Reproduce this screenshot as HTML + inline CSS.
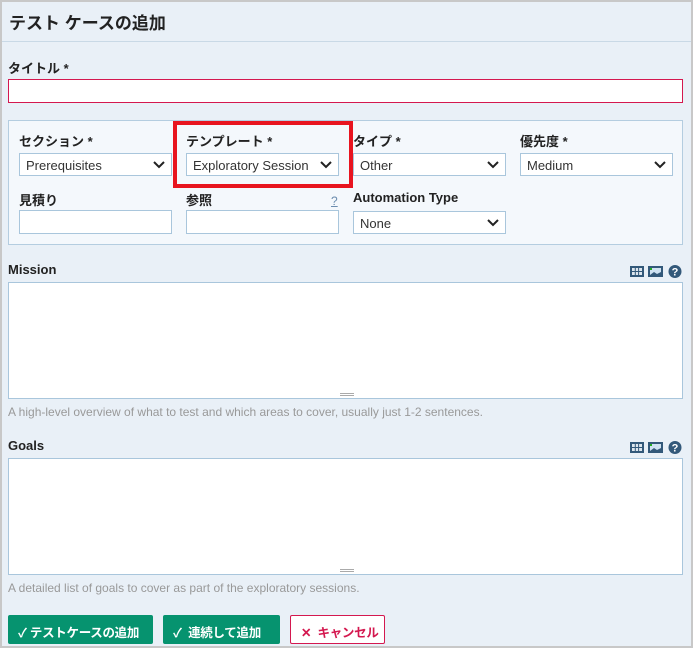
<!DOCTYPE html>
<html><head><meta charset="utf-8"><style>
*{box-sizing:border-box;margin:0;padding:0}
html{width:693px;height:648px;overflow:hidden}
body{width:693px;height:648px;overflow:hidden;background:#c8c8c8;font-family:"Liberation Sans","Noto Sans CJK JP",sans-serif;position:relative}
.pg{position:absolute;left:2px;top:2px;width:689px;height:644px;background:#e9f0f7;overflow:hidden}
.a{position:absolute;white-space:nowrap}
.h1{left:7px;top:7px;font-size:17px;font-weight:bold;color:#222}
.sep{left:0;top:39px;width:689px;height:1px;background:#c9d9e6}
.lbl{font-size:13px;color:#222;font-weight:bold}
.inp{background:#fff;border:1px solid #a9c6dc}
.sel{background:#fff;border:1px solid #a9c6dc;font-size:13px;color:#333;padding:4px 0 0 6px;height:23px;width:153px}
.sel svg{position:absolute;right:6px;top:7px}
.box{left:6px;top:118px;width:675px;height:125px;background:#f4f8fc;border:1px solid #b4cde0}
.help{font-size:12px;color:#999}
.ta{background:#fff;border:1px solid #a9c6dc;left:6px;width:675px;height:117px}
.grip{position:absolute;left:331px;bottom:2px;width:14px;height:3px;border-top:1px solid #aaa;border-bottom:1px solid #aaa}
.btn{top:613px;height:29px;font-size:12.5px;font-weight:bold;letter-spacing:-0.3px;color:#fff;background:#06936f;border-radius:2px;padding:7px 0 0 10px}
.ic{width:54px;height:14px}
</style></head><body><div class="pg">
<div class="a h1">テスト ケースの追加</div>
<div class="a sep"></div>
<div class="a lbl" style="left:6px;top:56px">タイトル *</div>
<div class="a" style="left:6px;top:77px;width:675px;height:24px;background:#fff;border:1px solid #d4184f"></div>
<div class="a box"></div>
<div class="a lbl" style="left:17px;top:129px">セクション *</div>
<div class="a lbl" style="left:184px;top:129px">テンプレート *</div>
<div class="a lbl" style="left:351px;top:129px">タイプ *</div>
<div class="a lbl" style="left:518px;top:129px">優先度 *</div>
<div class="a sel" style="left:17px;top:151px">Prerequisites<svg width="12" height="8"><path d="M1 1l5 5 5-5" fill="none" stroke="#222" stroke-width="2"/></svg></div>
<div class="a sel" style="left:184px;top:151px">Exploratory Session<svg width="12" height="8"><path d="M1 1l5 5 5-5" fill="none" stroke="#222" stroke-width="2"/></svg></div>
<div class="a sel" style="left:351px;top:151px">Other<svg width="12" height="8"><path d="M1 1l5 5 5-5" fill="none" stroke="#222" stroke-width="2"/></svg></div>
<div class="a sel" style="left:518px;top:151px">Medium<svg width="12" height="8"><path d="M1 1l5 5 5-5" fill="none" stroke="#222" stroke-width="2"/></svg></div>
<div class="a lbl" style="left:17px;top:188px">見積り</div>
<div class="a lbl" style="left:184px;top:188px">参照</div>
<div class="a" style="left:329px;top:192px;font-size:12px;color:#6b8cae;text-decoration:underline">?</div>
<div class="a lbl" style="left:351px;top:188px">Automation Type</div>
<div class="a inp" style="left:17px;top:208px;width:153px;height:24px"></div>
<div class="a inp" style="left:184px;top:208px;width:153px;height:24px"></div>
<div class="a sel" style="left:351px;top:209px">None<svg width="12" height="8"><path d="M1 1l5 5 5-5" fill="none" stroke="#222" stroke-width="2"/></svg></div>
<div class="a" style="left:171px;top:119px;width:180px;height:67px;border:4px solid #e8141f"></div>

<div class="a lbl" style="left:6px;top:260px">Mission</div>
<svg class="a ic" style="left:627px;top:262px" viewBox="0 0 54 14"><rect x="1" y="2" width="14" height="11" fill="#33597a"/><rect x="3" y="4" width="10" height="7" fill="#dde6ee"/><path d="M6.3 4v7M9.6 4v7M3 7.5h10" stroke="#33597a"/><rect x="19" y="2" width="15" height="11" fill="#33597a"/><rect x="21" y="4" width="11" height="7" fill="#cfe2f2"/><rect x="21" y="4" width="2" height="2" fill="#2a2"/><path d="M21 11l4-3 3 2 4-2v3z" fill="#33597a"/><circle cx="46" cy="7.5" r="6.5" fill="#33597a"/><text x="46" y="11.5" font-size="11" font-weight="bold" fill="#fff" text-anchor="middle" font-family="Liberation Sans">?</text></svg>
<div class="a ta" style="top:280px"><div class="grip"></div></div>
<div class="a help" style="left:6px;top:403px">A high-level overview of what to test and which areas to cover, usually just 1-2 sentences.</div>
<div class="a lbl" style="left:6px;top:436px">Goals</div>
<svg class="a ic" style="left:627px;top:438px" viewBox="0 0 54 14"><rect x="1" y="2" width="14" height="11" fill="#33597a"/><rect x="3" y="4" width="10" height="7" fill="#dde6ee"/><path d="M6.3 4v7M9.6 4v7M3 7.5h10" stroke="#33597a"/><rect x="19" y="2" width="15" height="11" fill="#33597a"/><rect x="21" y="4" width="11" height="7" fill="#cfe2f2"/><rect x="21" y="4" width="2" height="2" fill="#2a2"/><path d="M21 11l4-3 3 2 4-2v3z" fill="#33597a"/><circle cx="46" cy="7.5" r="6.5" fill="#33597a"/><text x="46" y="11.5" font-size="11" font-weight="bold" fill="#fff" text-anchor="middle" font-family="Liberation Sans">?</text></svg>
<div class="a ta" style="top:456px"><div class="grip"></div></div>
<div class="a help" style="left:6px;top:579px">A detailed list of goals to cover as part of the exploratory sessions.</div>

<div class="a btn" style="left:6px;width:145px">✓ テストケースの追加</div>
<div class="a btn" style="left:161px;width:117px">✓&nbsp; 連続して追加</div>
<div class="a btn" style="left:288px;width:95px;background:#fff;border:1px solid #d4184f;color:#d4184f;padding:6px 0 0 10px">✕&nbsp; キャンセル</div>
</div></body></html>
